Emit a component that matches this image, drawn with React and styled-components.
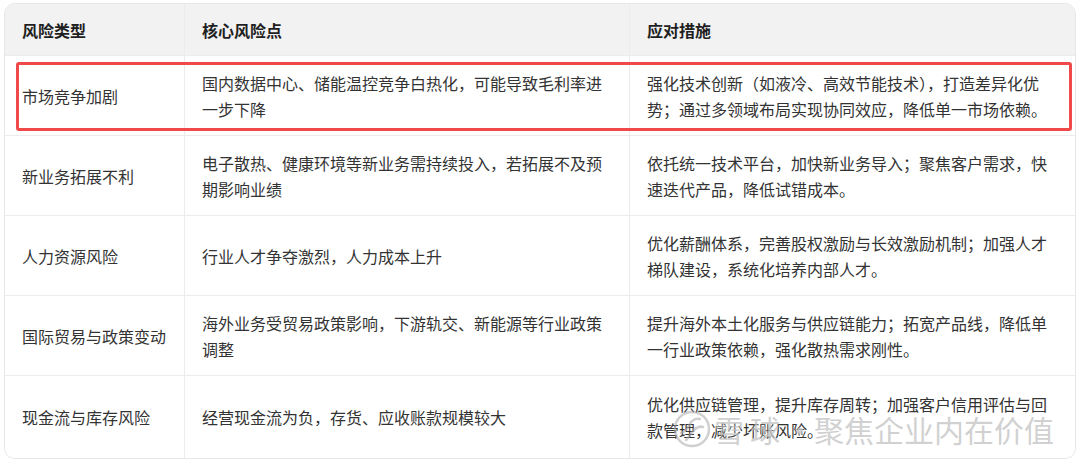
import React from "react";
import styled, { createGlobalStyle } from "styled-components";

const GlobalStyle = createGlobalStyle`
  html, body {
    margin: 0;
    padding: 0;
    background: #ffffff;
  }
  body {
    font-family: "Noto Sans CJK SC", "Noto Sans", sans-serif;
  }
`;

const Page = styled.div`
  position: relative;
  width: 1080px;
  height: 462px;
  padding: 3px 4px;
  box-sizing: border-box;
  background: #ffffff;
`;

const Table = styled.div`
  display: grid;
  grid-template-columns: 180px 1fr 1fr;
  border: 1px solid #e6e6e6;
  border-radius: 11px;
  overflow: hidden;
`;

const Cell = styled.div`
  display: flex;
  align-items: center;
  box-sizing: border-box;
  height: ${(p) => (p.$head ? 52 : p.$last ? 82 : 80)}px;
  padding: 0 17px;
  font-size: 16px;
  line-height: 26px;
  color: ${(p) => (p.$head ? "#1f1f1f" : "#333333")};
  font-weight: ${(p) => (p.$head ? 700 : 400)};
  background: ${(p) => (p.$head ? "#f2f2f2" : "#ffffff")};
  border-bottom: ${(p) => (p.$last ? "none" : "1px solid #ececec")};
  border-right: ${(p) => (p.$end ? "none" : "1px solid #ececec")};
`;

const Highlight = styled.div`
  position: absolute;
  left: 16px;
  top: 62px;
  width: 1056px;
  height: 69px;
  box-sizing: border-box;
  border: 3px solid #f0494b;
  border-radius: 3px;
  pointer-events: none;
`;

const Watermark = styled.div`
  position: absolute;
  left: 672px;
  top: 409px;
  display: flex;
  align-items: center;
  gap: 2px;
  color: rgba(170, 170, 170, 0.55);
  font-size: 30px;
  line-height: 40px;
  pointer-events: none;
  text-shadow: 0 0 2px rgba(255, 255, 255, 0.7);
`;

const Brand = styled.span`
  letter-spacing: 6px;
`;

const Dot = styled.span`
  margin: 0 -3px;
`;

const Logo = () => (
  <svg width="40" height="40" viewBox="0 0 40 40" fill="none">
    <circle cx="20" cy="20" r="17" stroke="rgba(170,170,170,0.55)" strokeWidth="2.5" />
    <path
      d="M9 24c4-1 7-5 9-9s6-6 10-5"
      stroke="rgba(170,170,170,0.55)"
      strokeWidth="2.5"
      strokeLinecap="round"
    />
    <path
      d="M14 31c3-3 5-7 8-10s6-4 9-3"
      stroke="rgba(170,170,170,0.55)"
      strokeWidth="2.5"
      strokeLinecap="round"
    />
  </svg>
);

const head = ["风险类型", "核心风险点", "应对措施"];

const rows = [
  [
    ["市场竞争加剧"],
    ["国内数据中心、储能温控竞争白热化，可能导致毛利率进", "一步下降"],
    ["强化技术创新（如液冷、高效节能技术），打造差异化优", "势；通过多领域布局实现协同效应，降低单一市场依赖。"],
  ],
  [
    ["新业务拓展不利"],
    ["电子散热、健康环境等新业务需持续投入，若拓展不及预", "期影响业绩"],
    ["依托统一技术平台，加快新业务导入；聚焦客户需求，快", "速迭代产品，降低试错成本。"],
  ],
  [
    ["人力资源风险"],
    ["行业人才争夺激烈，人力成本上升"],
    ["优化薪酬体系，完善股权激励与长效激励机制；加强人才", "梯队建设，系统化培养内部人才。"],
  ],
  [
    ["国际贸易与政策变动"],
    ["海外业务受贸易政策影响，下游轨交、新能源等行业政策", "调整"],
    ["提升海外本土化服务与供应链能力；拓宽产品线，降低单", "一行业政策依赖，强化散热需求刚性。"],
  ],
  [
    ["现金流与库存风险"],
    ["经营现金流为负，存货、应收账款规模较大"],
    ["优化供应链管理，提升库存周转；加强客户信用评估与回", "款管理，减少坏账风险。"],
  ],
];

const Lines = ({ lines }) => (
  <div>
    {lines.map((l, i) => (
      <React.Fragment key={i}>
        {i > 0 && <br />}
        {l}
      </React.Fragment>
    ))}
  </div>
);

const App = () => {
  return (
    <Page>
      <GlobalStyle />
      <Table>
        {head.map((h, i) => (
          <Cell key={h} $head $end={i === 2}>
            {h}
          </Cell>
        ))}
        {rows.map((row, r) =>
          row.map((lines, c) => (
            <Cell key={`${r}-${c}`} $end={c === 2} $last={r === rows.length - 1}>
              <Lines lines={lines} />
            </Cell>
          ))
        )}
      </Table>
      <Highlight />
      <Watermark>
        <Logo />
        <Brand>雪球</Brand>
        <Dot>·</Dot>
        <span>聚焦企业内在价值</span>
      </Watermark>
    </Page>
  );
};

export default App;
